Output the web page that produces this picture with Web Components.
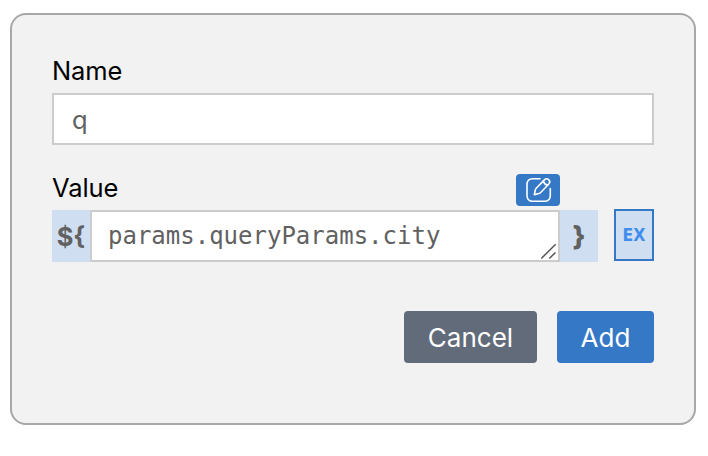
<!DOCTYPE html>
<html lang="en">
<head>
<meta charset="utf-8">
<title>Parameter</title>
<style>
body{margin:0;background:#fff;font-family:Inter,"Liberation Sans",sans-serif;font-size:25.5px;color:#000}
</style>
</head>
<body>
<param-dialog>
  <field-label>Name</field-label>
  <text-field>q</text-field>
  <field-label class="value">Value<edit-button slot="action"></edit-button></field-label>
  <expression-field>params.queryParams.city</expression-field>
  <action-button slot="actions" style="--bg:#626b7a;--w:133px">Cancel</action-button>
  <action-button slot="actions" style="--bg:#3478c6;--w:97px">Add</action-button>
</param-dialog>
<script>
const define = (name, html) => customElements.define(name, class extends HTMLElement {
  constructor() {
    super();
    this.attachShadow({mode: 'open'}).innerHTML = html;
  }
});

define('param-dialog', `<style>
:host{display:block;box-sizing:border-box;width:686px;height:412px;margin:13px 0 0 10px;padding:36px 40px 0;border:2px solid #a8a8a8;border-radius:16px;background:#f2f2f2}
footer{display:flex;justify-content:flex-end;gap:20px;margin-top:49px}
::slotted(.value){margin-top:23px;height:42px}
</style><slot></slot><footer><slot name="actions"></slot></footer>`);

define('field-label', `<style>
:host{display:flex;justify-content:space-between;box-sizing:border-box;height:42px;padding:4px 94px 0 0;line-height:32px;letter-spacing:-.1px}
.action{display:flex;margin-top:2px;height:32px}
</style><span><slot></slot></span><span class="action"><slot name="action"></slot></span>`);

define('text-field', `<style>
:host{display:block;box-sizing:border-box;height:52px;padding:0 18px;border:2px solid #ccc;background:#fff;color:#616161;line-height:49px}
</style><slot></slot>`);

define('edit-button', `<style>
:host{display:flex;align-items:center;justify-content:center;width:44px;height:32px;border-radius:4px;background:#3478c6}
svg{display:block}
</style><svg width="44" height="32" viewBox="0 0 44 32" fill="none" stroke="#fff" stroke-width="1.6" stroke-linecap="round" stroke-linejoin="round">
<path d="M24 4.7h-7.2q-5.8 0-5.8 5.8v10.7q0 6.1 5.8 6.1h11.5q6 0 6-6.1v-6.7"/>
<path d="M18.3 20.6l1-4.6q.2-1 .9-1.7l8.4-8.7q1.8-1.8 4 .1t.4 4.1l-8.3 8.7q-.7.8-1.7 1z"/>
<path d="M27.3 7q.9 3.4 4.4 4.2"/>
</svg>`);

define('expression-field', `<style>
:host{display:grid;grid-template-columns:38px 470px 38px 40px;height:52px;color:#616161}
.brace{display:flex;align-items:center;justify-content:center;background:#cfdef1;font-weight:700;font-size:25.5px}
.close{font-weight:800;font-size:27px}
.box{display:flex;justify-content:space-between;align-items:flex-end;box-sizing:border-box;border:2px solid #ccc;background:#fff;padding-left:16px;font:24px "DejaVu Sans Mono",monospace}
.box span{line-height:48px}
svg{display:block}
.ex{box-sizing:border-box;width:40px;height:52px;margin:-1px 0 0 16px;border:2px solid #3478c6;background:#cfdef1;color:#408eec;font:700 17.5px/48px "DejaVu Sans Condensed","Noto Sans",sans-serif;text-align:center}
</style><div class="brace">\${</div><div class="box"><span><slot></slot></span><svg width="17" height="19" viewBox="0 0 17 19" stroke="#555" stroke-width="1.5"><path d="M.3 17.5L14.7 3.2M8.3 17.5l6.2-6"/></svg></div><div class="brace close">}</div><div class="ex">EX</div>`);

define('action-button', `<style>
:host{display:flex;align-items:center;justify-content:center;width:var(--w);height:52px;border-radius:4px;background:var(--bg);color:#fff;font-size:26px}
span{line-height:50px;padding-top:2px}
</style><span><slot></slot></span>`);
</script>
</body>
</html>
